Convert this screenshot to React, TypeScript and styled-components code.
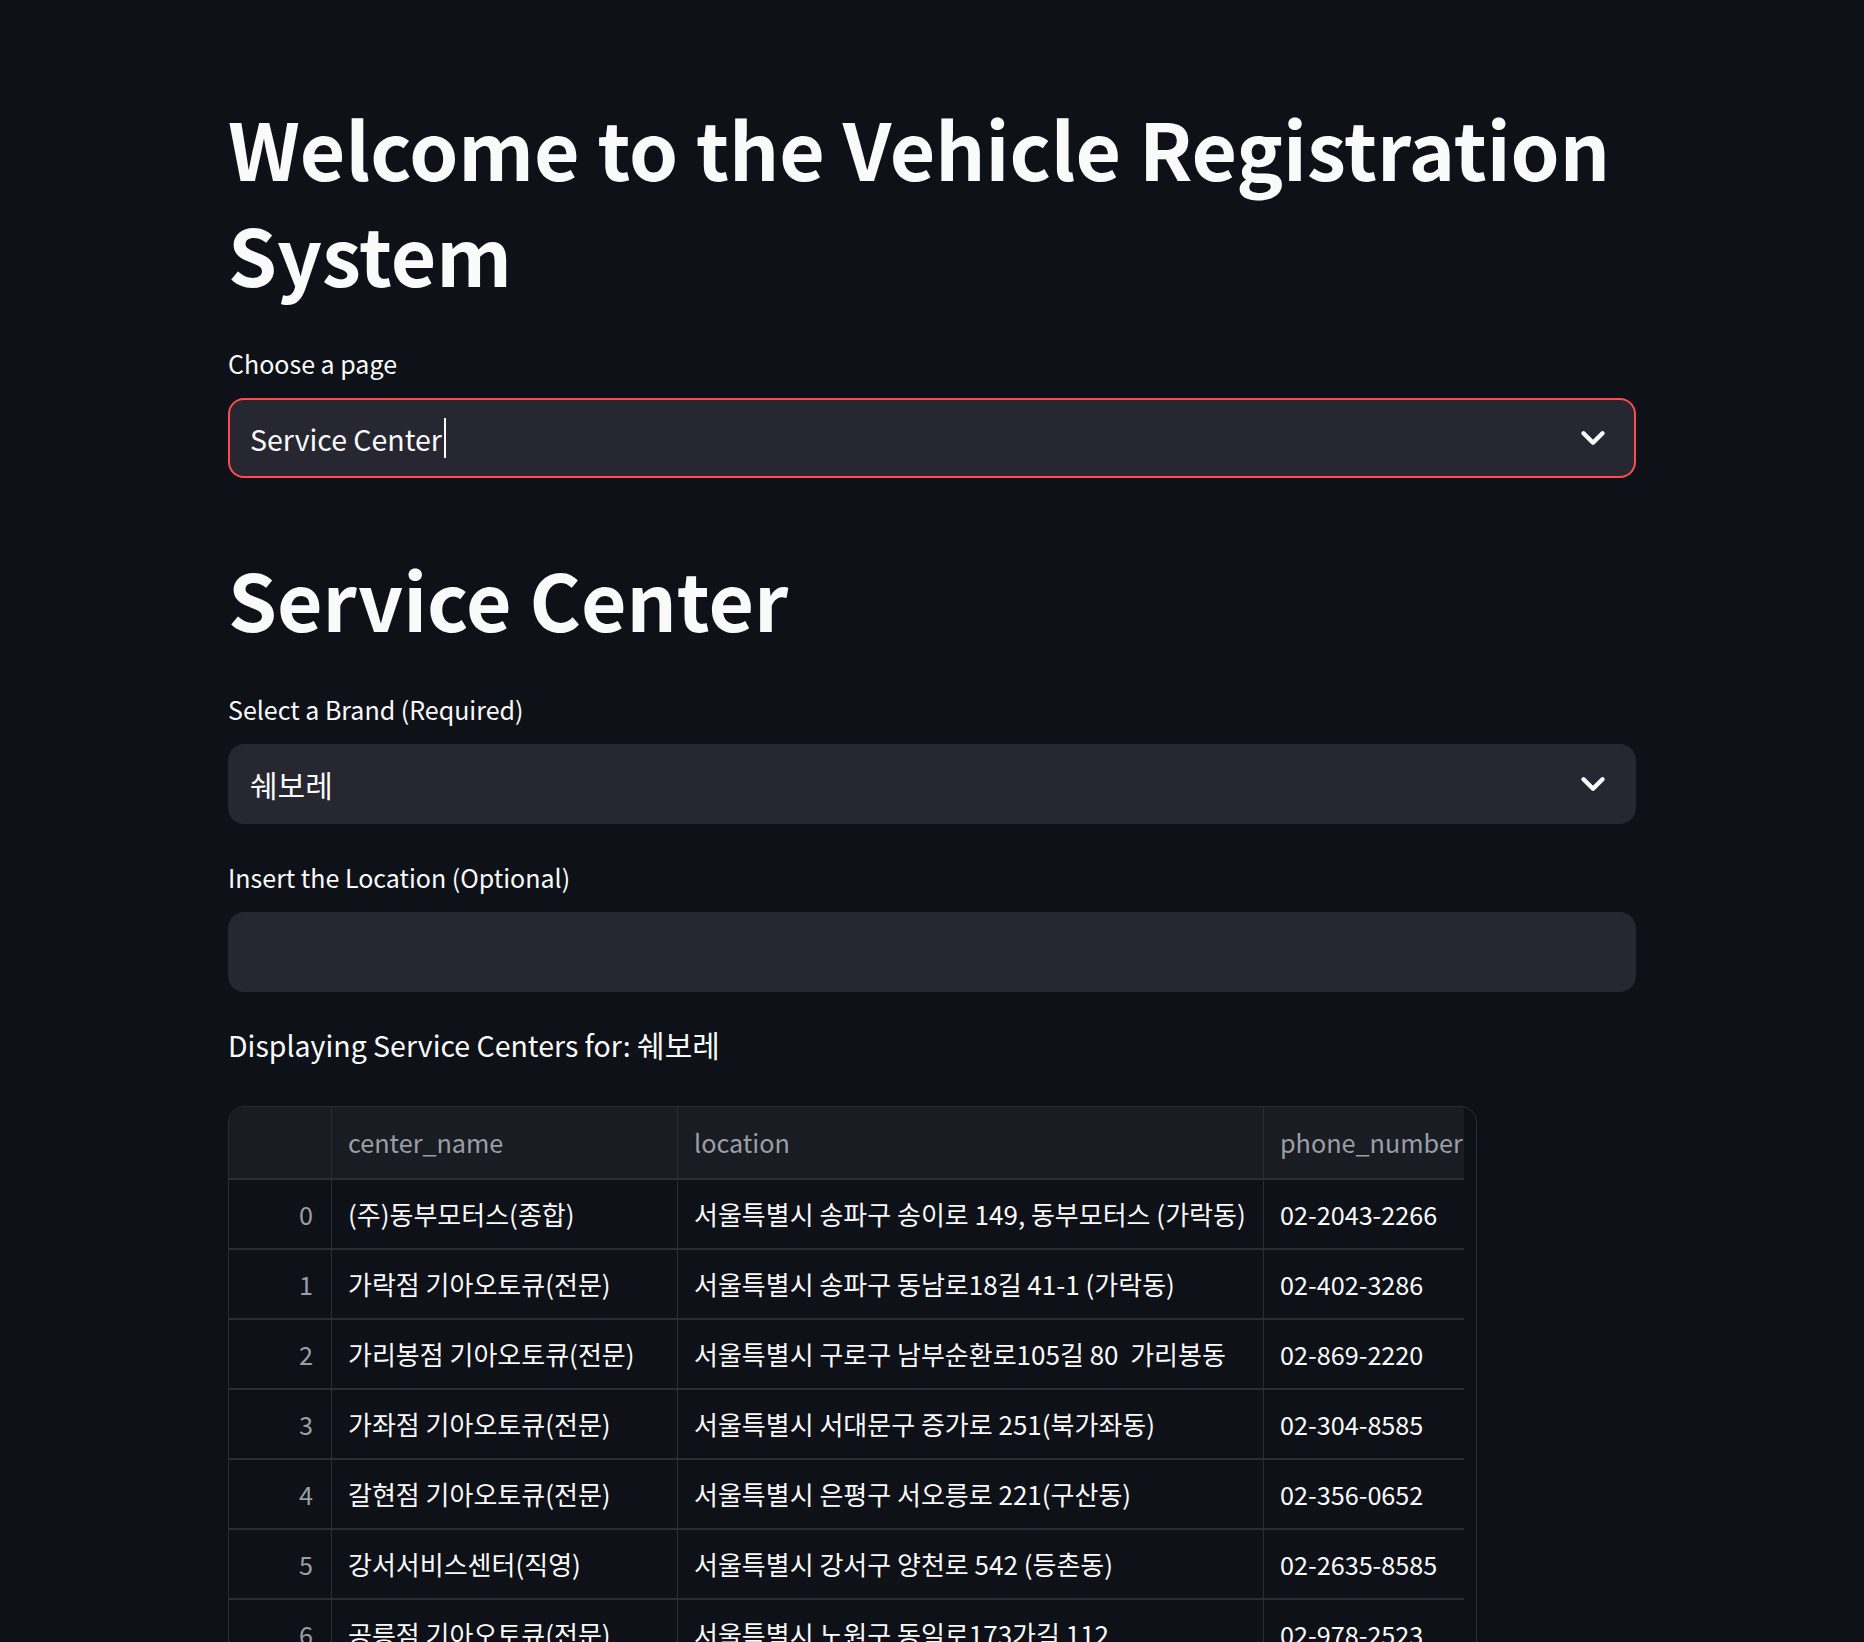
import React from "react";
import styled, { createGlobalStyle } from "styled-components";
import { ChevronDown } from "lucide-react";

const GlobalStyle = createGlobalStyle`
  html, body {
    margin: 0;
    padding: 0;
    background: #0e1117;
  }
  body {
    font-family: "Noto Sans CJK KR", "Noto Sans", sans-serif;
    color: #fafafa;
  }
`;

const AppView = styled.div`
  height: 100vh;
  overflow: hidden;
  background: #0e1117;
`;

const Main = styled.main`
  width: 1408px;
  margin: 0 auto;
  padding-top: 95px;
  display: flex;
  flex-direction: column;
`;

const Title = styled.h1<{ $top?: number }>`
  margin: ${(p) => p.$top ?? 0}px 0 0 0;
  font-size: 78.5px;
  line-height: 105.6px;
  font-weight: 700;
  color: #fafafa;
`;

const Label = styled.label<{ $top: number }>`
  display: block;
  margin-top: ${(p) => p.$top}px;
  margin-bottom: 15px;
  font-size: 25px;
  line-height: 40px;
  color: #fafafa;
`;

const Field = styled.div<{ $focused?: boolean }>`
  box-sizing: border-box;
  height: 80px;
  display: flex;
  align-items: center;
  padding: 0 22px 0 20px;
  background: #262730;
  border: 2px solid ${(p) => (p.$focused ? "#ff4b4b" : "#262730")};
  border-radius: 16px;
  color: #fafafa;
`;

const Value = styled.span<{ $size?: number }>`
  flex: 1;
  display: flex;
  align-items: center;
  font-size: ${(p) => p.$size ?? 28.5}px;
`;

const Caret = styled.span`
  display: inline-block;
  width: 2px;
  height: 40px;
  margin-left: 2px;
  background: #fafafa;
`;

const Chevron = styled(ChevronDown)`
  flex: none;
  color: #fafafa;
`;

const Caption = styled.p`
  margin: 28px 0 0 0;
  font-size: 28.5px;
  line-height: 48px;
  color: #fafafa;
`;

const Hangul = styled.span`
  font-size: 30px;
`;

const Frame = styled.div`
  box-sizing: border-box;
  width: 1249px;
  margin-top: 37px;
  padding-right: 12px;
  border: 1.5px solid #2b2d35;
  border-radius: 16px;
  overflow: hidden;
`;

const Row = styled.div<{ $head?: boolean }>`
  display: grid;
  grid-template-columns: 102px 346px 586px 201px;
  height: ${(p) => (p.$head ? 71 : 68)}px;
  background: ${(p) => (p.$head ? "#1a1c24" : "#0e1117")};
  border-bottom: 2px solid #2b2d35;
`;

const Cell = styled.div<{ $muted?: boolean; $index?: boolean; $latin?: boolean }>`
  display: flex;
  align-items: center;
  justify-content: ${(p) => (p.$index ? "flex-end" : "flex-start")};
  padding: ${(p) => (p.$index ? "0 18px 0 0" : "0 0 0 16px")};
  border-left: ${(p) => (p.$index ? "none" : "1px solid #2b2d35")};
  font-size: ${(p) => (p.$latin ? 25.2 : 26)}px;
  color: ${(p) => (p.$muted ? "#9b9ea5" : "#fafafa")};
  white-space: pre;
  overflow: hidden;
`;

const rows: [string, string, string][] = [
  ["(주)동부모터스(종합)", "서울특별시 송파구 송이로 149, 동부모터스 (가락동)", "02-2043-2266"],
  ["가락점 기아오토큐(전문)", "서울특별시 송파구 동남로18길 41-1 (가락동)", "02-402-3286"],
  ["가리봉점 기아오토큐(전문)", "서울특별시 구로구 남부순환로105길 80  가리봉동", "02-869-2220"],
  ["가좌점 기아오토큐(전문)", "서울특별시 서대문구 증가로 251(북가좌동)", "02-304-8585"],
  ["갈현점 기아오토큐(전문)", "서울특별시 은평구 서오릉로 221(구산동)", "02-356-0652"],
  ["강서서비스센터(직영)", "서울특별시 강서구 양천로 542 (등촌동)", "02-2635-8585"],
  ["공릉점 기아오토큐(전문)", "서울특별시 노원구 동일로173가길 112", "02-978-2523"],
  ["관악점 기아오토큐(전문)", "서울특별시 관악구 남부순환로 1690", "02-872-8585"],
];

const App = () => {
  return (
    <AppView>
      <GlobalStyle />
      <Main>
        <Title>Welcome to the Vehicle Registration System</Title>

        <Label $top={37}>Choose a page</Label>
        <Field $focused>
          <Value>
            Service Center
            <Caret />
          </Value>
          <Chevron size={38} strokeWidth={2.8} />
        </Field>

        <Title $top={68}>Service Center</Title>

        <Label $top={37}>Select a Brand (Required)</Label>
        <Field>
          <Value $size={30}>쉐보레</Value>
          <Chevron size={38} strokeWidth={2.8} />
        </Field>

        <Label $top={33}>Insert the Location (Optional)</Label>
        <Field />

        <Caption>
          Displaying Service Centers for: <Hangul>쉐보레</Hangul>
        </Caption>

        <Frame>
          <Row $head>
            <Cell $index />
            <Cell $muted $latin>center_name</Cell>
            <Cell $muted $latin>location</Cell>
            <Cell $muted $latin>phone_number</Cell>
          </Row>
          {rows.map(([name, loc, phone], i) => (
            <Row key={i}>
              <Cell $index $muted $latin>{i}</Cell>
              <Cell>{name}</Cell>
              <Cell>{loc}</Cell>
              <Cell $latin>{phone}</Cell>
            </Row>
          ))}
        </Frame>
      </Main>
    </AppView>
  );
};

export default App;
